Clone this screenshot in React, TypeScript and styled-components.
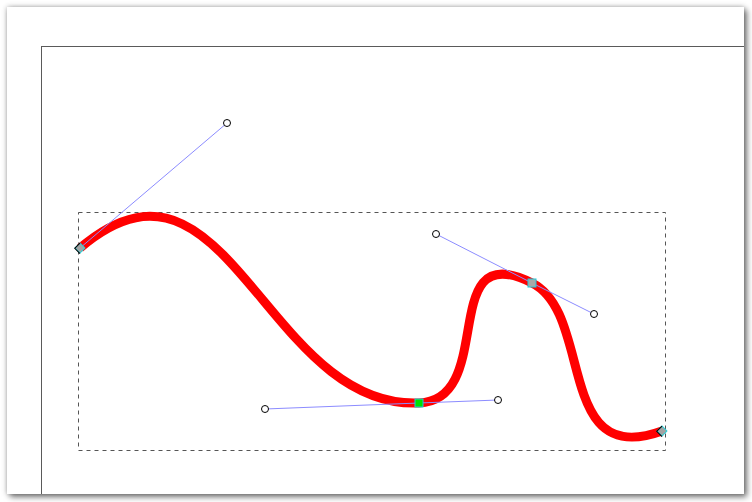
import React from 'react';
import styled, { createGlobalStyle } from 'styled-components';

const GlobalStyle = createGlobalStyle`
  html, body {
    margin: 0;
    padding: 0;
    background: #ffffff;
    font-family: "Liberation Sans", Arial, sans-serif;
  }
`;

const Screen = styled.div`
  width: 752px;
  height: 502px;
  padding: 7px 8px 8px 7px;
  box-sizing: border-box;
  background: #ffffff;
  overflow: hidden;
`;

const Window = styled.div`
  position: relative;
  width: 737px;
  height: 487px;
  background: #ffffff;
  overflow: hidden;
  box-shadow: 3px 3px 6px rgba(0, 0, 0, 0.5), 0 0 5px rgba(0, 0, 0, 0.3);
`;

const Page = styled.div`
  margin: 39px 0 0 34px;
  width: 900px;
  height: 600px;
  border: 1px solid #5a5a5a;
`;

const Canvas = styled.svg`
  position: absolute;
  left: 0;
  top: 0;
`;

type Pt = [number, number];

const handles: Array<{ node: Pt; handle: Pt }> = [
  { node: [80, 248], handle: [227, 123] },
  { node: [419, 403], handle: [265, 409] },
  { node: [419, 403], handle: [498, 400] },
  { node: [532, 283], handle: [436, 234] },
  { node: [532, 283], handle: [594, 314] },
];

const curve =
  'M 80 248 C 227 123 265 409 419 403 C 498 400 436 234 532 283 C 594 314 555 470 662 431';

const Diamond: React.FC<{ at: Pt }> = ({ at }) => (
  <g transform={`translate(${at[0]} ${at[1]}) rotate(45)`}>
    <rect x={-3.5} y={-3.5} width={7} height={7} fill="#a3a3a3" stroke="#2ad0d8" strokeWidth={1} />
    <path d="M -3.5 -3.5 L -3.5 4 L 4 4" fill="none" stroke="#000" strokeWidth={1} />
  </g>
);

const SquareNode: React.FC<{ at: Pt; fill: string }> = ({ at, fill }) => (
  <rect
    x={at[0] - 4}
    y={at[1] - 4}
    width={8}
    height={8}
    fill={fill}
    stroke="#22c8d8"
    strokeWidth={1}
  />
);

const App: React.FC = () => (
  <>
    <GlobalStyle />
    <Screen>
      <Window>
        <Page />
        <Canvas width={737} height={487} viewBox="7 7 737 487">
          <rect
            x={78.5}
            y={212.5}
            width={587}
            height={238}
            fill="none"
            stroke="#555"
            strokeWidth={1}
            strokeDasharray="4 4"
          />
          <path d={curve} fill="none" stroke="#ff0000" strokeWidth={9} />
          {handles.map((h, i) => (
            <line
              key={`l${i}`}
              x1={h.node[0]}
              y1={h.node[1]}
              x2={h.handle[0]}
              y2={h.handle[1]}
              stroke="#8c8cff"
              strokeWidth={1}
            />
          ))}
          {handles.map((h, i) => (
            <circle
              key={`c${i}`}
              cx={h.handle[0]}
              cy={h.handle[1]}
              r={3.5}
              fill="#fff"
              stroke="#000"
              strokeWidth={1}
            />
          ))}
          <Diamond at={[80, 248]} />
          <Diamond at={[662, 431]} />
          <SquareNode at={[419, 403]} fill="#00e000" />
          <SquareNode at={[532, 283]} fill="#a8a8a8" />
        </Canvas>
      </Window>
    </Screen>
  </>
);

export default App;
